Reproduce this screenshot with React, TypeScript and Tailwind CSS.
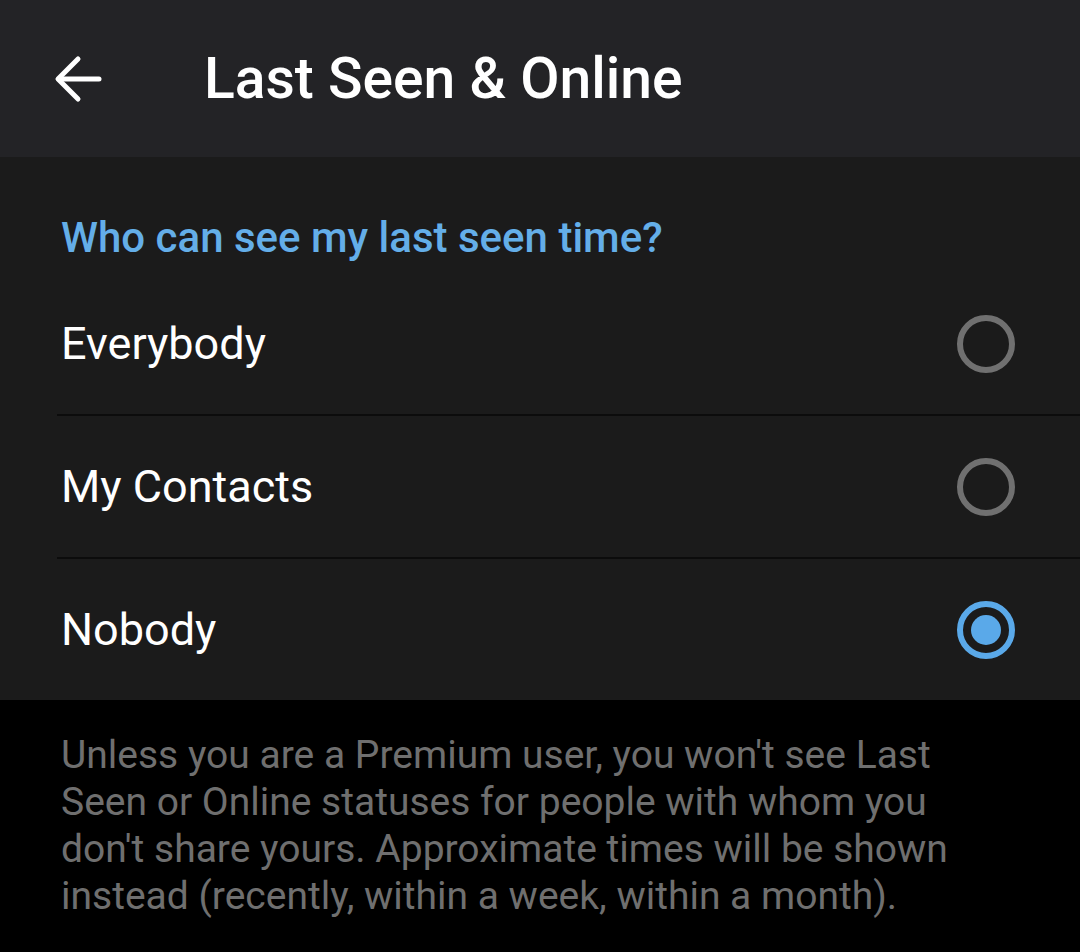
const options = ["Everybody", "My Contacts", "Nobody"];

const Radio = ({ checked }: { checked: boolean }) => {
    if (checked) {
        return (
            <div className="w-[58px] h-[58px] rounded-full border-[6px] border-[#5aa9e9] flex items-center justify-center">
                <div className="w-[30px] h-[30px] rounded-full bg-[#5aa9e9]" />
            </div>
        );
    }
    return <div className="w-[58px] h-[58px] rounded-full border-[6px] border-[#707070]" />;
};

const App = () => {
    const selected = "Nobody";
    return (
        <div className="w-[1080px] h-[952px] bg-black font-['Roboto',sans-serif] overflow-hidden">
            {/* top bar */}
            <div className="h-[157px] bg-[#232326] flex items-center">
                <div className="w-[204px] h-full flex items-center pl-[54px]">
                    <svg width="50" height="50" viewBox="0 0 50 50" fill="none" stroke="white" strokeWidth="5" strokeLinecap="round" strokeLinejoin="round">
                        <path d="M45 25H5" />
                        <path d="M24 5 4 25l20 20" />
                    </svg>
                </div>
                <span className="text-white text-[57px] font-medium leading-none">Last Seen &amp; Online</span>
            </div>

            {/* options */}
            <div className="bg-[#1b1b1b]">
                <div className="h-[116px] pl-[61px] flex items-end pb-[14px]">
                    <span className="text-[#64aee8] text-[42px] font-medium leading-none">Who can see my last seen time?</span>
                </div>
                {options.map((opt, i) => (
                    <div key={opt} className="ml-[57px]">
                        <div className="h-[141px] flex items-center justify-between pl-[4px] pr-[65px]">
                            <span className="text-white text-[45px] leading-none">{opt}</span>
                            <Radio checked={opt === selected} />
                        </div>
                        {i < options.length - 1 && <div className="h-[2px] bg-[#0c0c0c]" />}
                    </div>
                ))}
            </div>

            {/* footer note */}
            <div className="pl-[61px] pr-[100px] pt-[32px]">
                <p className="text-[#6f6f6f] text-[39px] leading-[47px]">
                    Unless you are a Premium user, you won't see Last Seen or Online statuses for people with whom you don't share yours. Approximate times will be shown instead (recently, within a week, within a month).
                </p>
            </div>
        </div>
    );
};

export default App;
